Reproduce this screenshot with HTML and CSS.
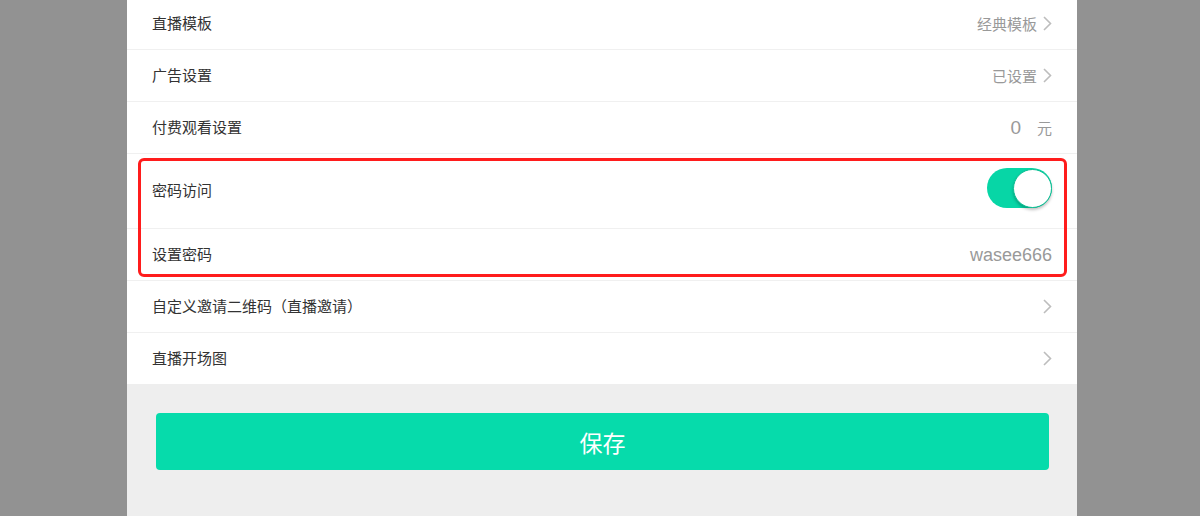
FILE: index.html
```html
<!DOCTYPE html>
<html lang="zh-CN">
<head>
<meta charset="utf-8">
<title>直播设置</title>
<link rel="stylesheet" href="styles.css">
</head>
<body>
<div class="page">
  <div class="panel">
    <div class="list">
      <div class="row">
        <span class="label">直播模板</span>
        <span class="value">经典模板<svg class="chev" viewBox="0 0 9 15"><polyline points="1,1 7.5,7.5 1,14"/></svg></span>
      </div>
      <div class="row">
        <span class="label">广告设置</span>
        <span class="value">已设置<svg class="chev" viewBox="0 0 9 15"><polyline points="1,1 7.5,7.5 1,14"/></svg></span>
      </div>
      <div class="row">
        <span class="label">付费观看设置</span>
        <span class="value"><span class="num">0</span><span class="unit">元</span></span>
      </div>
      <div class="group">
        <div class="row row-tall">
          <span class="label">密码访问</span>
          <span class="toggle"><span class="knob"></span></span>
        </div>
        <div class="row">
          <span class="label">设置密码</span>
          <span class="value"><span class="pwd">wasee666</span></span>
        </div>
        <div class="highlight"></div>
      </div>
      <div class="row">
        <span class="label">自定义邀请二维码（直播邀请）</span>
        <span class="value"><svg class="chev" viewBox="0 0 9 15"><polyline points="1,1 7.5,7.5 1,14"/></svg></span>
      </div>
      <div class="row last">
        <span class="label">直播开场图</span>
        <span class="value"><svg class="chev" viewBox="0 0 9 15"><polyline points="1,1 7.5,7.5 1,14"/></svg></span>
      </div>
    </div>
    <div class="footer">
      <button class="save">保存</button>
    </div>
  </div>
</div>
</body>
</html>
```

FILE: styles.css
```css
html, body {
  margin: 0;
  padding: 0;
  height: 100%;
  overflow: hidden;
}
body {
  background: #929292;
  font-family: "Noto Sans CJK SC", "Microsoft YaHei", sans-serif;
  color: #333;
}
.page {
  display: flex;
  justify-content: center;
  padding-left: 4px;
}
.panel {
  width: 950px;
  margin-top: -2px;
  background: #eeeeee;
  height: 518px;
}
.list {
  background: #fff;
}
.row {
  display: flex;
  align-items: center;
  justify-content: space-between;
  height: 51px;
  padding: 0 25px;
  border-bottom: 1px solid #f0f0f0;
  font-size: 15px;
  line-height: 20px;
}
.row.last {
  border-bottom: none;
}
.row-tall {
  height: 74px;
}
.label {
  color: #333;
  margin-top: -2px;
}
.value {
  display: flex;
  align-items: center;
  color: #999;
  font-size: 15px;
}
.chev {
  width: 9px;
  height: 15px;
  margin-left: 6px;
  fill: none;
  stroke: #bdbdbd;
  stroke-width: 1.6;
}
.num {
  font-family: "Liberation Sans", Arial, sans-serif;
  font-size: 19px;
  color: #999;
  margin-right: 16px;
}
.unit {
  font-size: 15px;
  color: #999;
}
.pwd {
  font-family: "Liberation Sans", Arial, sans-serif;
  font-size: 18px;
  color: #999;
}
.group {
  position: relative;
}
.highlight {
  position: absolute;
  top: 4px;
  left: 11px;
  right: 10px;
  bottom: 4px;
  border: 3px solid #ff1c1c;
  border-radius: 6px;
  pointer-events: none;
}
.toggle {
  position: relative;
  width: 65px;
  height: 40px;
  margin-top: -7px;
  border-radius: 20px;
  background: #07d6a6;
}
.knob {
  position: absolute;
  right: 0;
  top: 1px;
  width: 37px;
  height: 37px;
  border-radius: 50%;
  background: #fff;
  border: 0.5px solid #0bbf94;
  box-shadow: 0 2px 3px rgba(0,0,0,0.25);
}
.footer {
  padding: 29px 28px 0 29px;
}
.save {
  display: block;
  width: 100%;
  height: 57px;
  border: none;
  border-radius: 4px;
  background: #06dbab;
  color: #fff;
  font-family: "Noto Sans CJK SC", "Microsoft YaHei", sans-serif;
  font-size: 23px;
  cursor: pointer;
}
```
